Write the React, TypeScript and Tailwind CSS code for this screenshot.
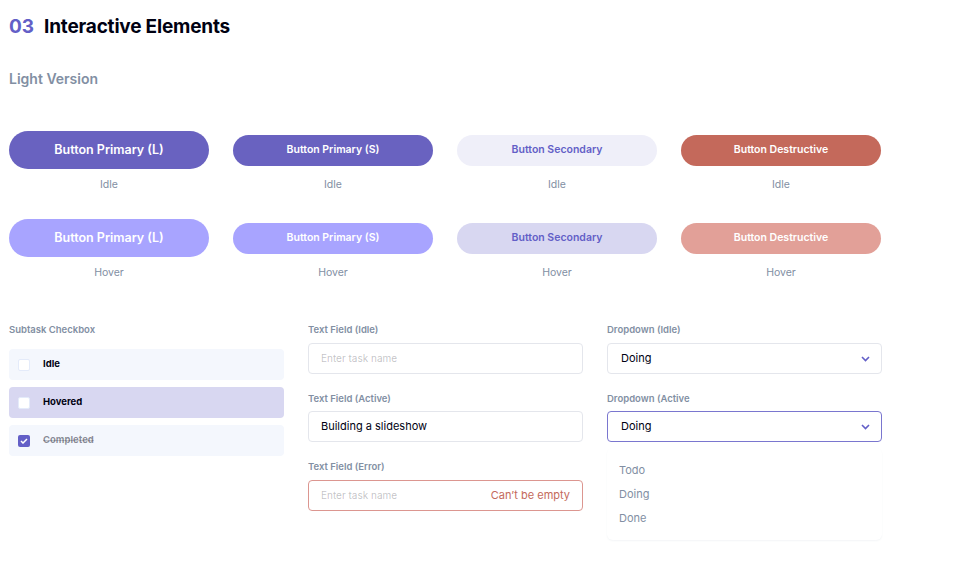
import { FC } from "react";

const font = { fontFamily: "Inter, 'Noto Sans', sans-serif" };

type Variant = "primaryL" | "primaryS" | "secondary" | "destructive";

const btnClass: Record<Variant, [string, string]> = {
  primaryL: [
    "h-[38px] text-[12.5px] bg-[#6962c0] text-white",
    "h-[38px] text-[12.5px] bg-[#a8a4ff] text-white",
  ],
  primaryS: [
    "h-[31px] text-[10.5px] bg-[#6962c0] text-white",
    "h-[31px] text-[10.5px] bg-[#a8a4ff] text-white",
  ],
  secondary: [
    "h-[31px] text-[10.5px] bg-[#efeff9] text-[#635fc7]",
    "h-[31px] text-[10.5px] bg-[#d8d7f1] text-[#635fc7]",
  ],
  destructive: [
    "h-[31px] text-[10.5px] bg-[#c4695b] text-white",
    "h-[31px] text-[10.5px] bg-[#e2a098] text-white",
  ],
};

const labels: Record<Variant, string> = {
  primaryL: "Button Primary (L)",
  primaryS: "Button Primary (S)",
  secondary: "Button Secondary",
  destructive: "Button Destructive",
};

const ButtonCell: FC<{ variant: Variant; hover?: boolean }> = ({ variant, hover }) => (
  <div className="flex flex-col items-center w-[200px]">
    <div className="h-[38px] w-full flex items-center">
      <div
        className={`w-full rounded-full flex items-center justify-center font-semibold ${btnClass[variant][hover ? 1 : 0]}`}
      >
        {labels[variant]}
      </div>
    </div>
    <div className="mt-[9px] leading-[14px] text-[10.5px] text-[#828fa3]">{hover ? "Hover" : "Idle"}</div>
  </div>
);

const SectionLabel: FC<{ children: React.ReactNode }> = ({ children }) => (
  <div className="leading-[14px] text-[9.5px] font-semibold text-[#828fa3]">{children}</div>
);

const Check: FC<{ checked?: boolean }> = ({ checked }) =>
  checked ? (
    <div className="w-[12px] h-[12px] rounded-[2px] bg-[#635fc7] flex items-center justify-center">
      <svg width="8" height="6" viewBox="0 0 8 6" fill="none">
        <path d="M1 3l2 2 4-4" stroke="white" strokeWidth="1.5" />
      </svg>
    </div>
  ) : (
    <div className="w-[12px] h-[12px] rounded-[2px] bg-white border border-[#e4ebfa]" />
  );

const Chevron = () => (
  <svg width="9" height="6" viewBox="0 0 9 6" fill="none">
    <path d="M1 1l3.5 3.5L8 1" stroke="#635fc7" strokeWidth="1.6" />
  </svg>
);

export default function App() {
  return (
    <div className="w-[962px] h-[583px] bg-white pl-[9px] overflow-hidden" style={font}>
      <div className="pt-[15px] flex items-center gap-[10px] leading-[24px] text-[19px] font-bold">
        <span className="text-[#635fc7]">03</span>
        <span className="text-[#000112] tracking-[-0.2px]">Interactive Elements</span>
      </div>
      <div className="mt-[31px] leading-[18px] text-[14px] font-semibold text-[#828fa3]">Light Version</div>

      <div className="mt-[43px] flex flex-col gap-[27px]">
        <div className="flex gap-[24px]">
          <ButtonCell variant="primaryL" />
          <ButtonCell variant="primaryS" />
          <ButtonCell variant="secondary" />
          <ButtonCell variant="destructive" />
        </div>
        <div className="flex gap-[24px]">
          <ButtonCell variant="primaryL" hover />
          <ButtonCell variant="primaryS" hover />
          <ButtonCell variant="secondary" hover />
          <ButtonCell variant="destructive" hover />
        </div>
      </div>

      <div className="mt-[43px] flex gap-[24px]">
        {/* checkbox column */}
        <div className="w-[275px] flex flex-col">
          <SectionLabel>Subtask Checkbox</SectionLabel>
          <div className="mt-[12px] flex flex-col gap-[7px]">
            <div className="h-[31px] rounded-[4px] bg-[#f4f7fd] flex items-center gap-[13px] pl-[9px] text-[9.5px] font-bold text-[#000112]">
              <Check />
              Idle
            </div>
            <div className="h-[31px] rounded-[4px] bg-[#d8d7f1] flex items-center gap-[13px] pl-[9px] text-[9.5px] font-bold text-[#000112]">
              <Check />
              Hovered
            </div>
            <div className="h-[31px] rounded-[4px] bg-[#f4f7fd] flex items-center gap-[13px] pl-[9px] text-[9.5px] font-bold text-[#000112]/45 line-through decoration-[#000112]/20">
              <Check checked />
              Completed
            </div>
          </div>
        </div>

        {/* text fields */}
        <div className="w-[275px] flex flex-col">
          <SectionLabel>Text Field (Idle)</SectionLabel>
          <div className="mt-[6px] h-[31px] rounded-[4px] border border-[#e4e6ec] flex items-center px-[12px] text-[10px] text-[#000112]/25">
            Enter task name
          </div>
          <div className="mt-[18px]">
            <SectionLabel>Text Field (Active)</SectionLabel>
          </div>
          <div className="mt-[5px] h-[31px] rounded-[4px] border border-[#e4e6ec] flex items-center px-[12px] text-[11px] text-[#000112]">
            Building a slideshow
          </div>
          <div className="mt-[18px]">
            <SectionLabel>Text Field (Error)</SectionLabel>
          </div>
          <div className="mt-[6px] h-[31px] rounded-[4px] border border-[#dc9690] flex items-center justify-between px-[12px] text-[10px]">
            <span className="text-[#000112]/25">Enter task name</span>
            <span className="text-[11px] text-[#c4695b]">Can’t be empty</span>
          </div>
        </div>

        {/* dropdowns */}
        <div className="w-[275px] flex flex-col">
          <SectionLabel>Dropdown (Idle)</SectionLabel>
          <div className="mt-[6px] h-[31px] rounded-[4px] border border-[#e4e6ec] flex items-center justify-between pl-[13px] pr-[11px] text-[11px] text-[#000112]">
            Doing
            <Chevron />
          </div>
          <div className="mt-[18px]">
            <SectionLabel>Dropdown (Active</SectionLabel>
          </div>
          <div className="mt-[5px] h-[31px] rounded-[4px] border border-[#7a76cf] flex items-center justify-between pl-[13px] pr-[11px] text-[11px] text-[#000112]">
            Doing
            <Chevron />
          </div>
          <div className="mt-[6px] h-[92px] rounded-[6px] bg-white shadow-[0_1px_2px_rgba(54,78,126,0.06)] flex flex-col pl-[12px] pt-[15px] gap-[10px] text-[11px] leading-[14px] text-[#828fa3]">
            <div>Todo</div>
            <div>Doing</div>
            <div>Done</div>
          </div>
        </div>
      </div>
    </div>
  );
}
